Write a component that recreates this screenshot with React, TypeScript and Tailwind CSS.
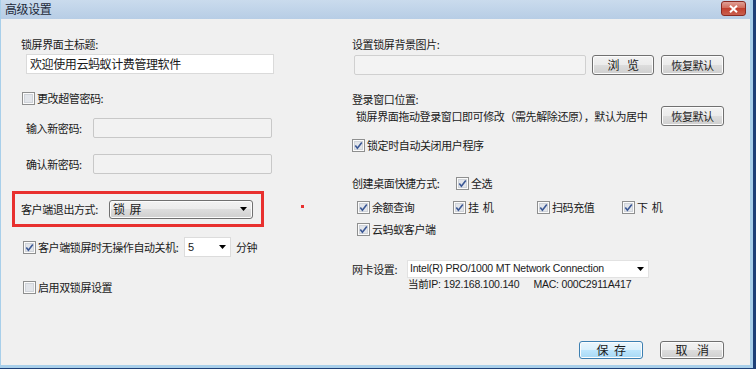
import type { ReactNode } from 'react';

function Check({ checked }: { checked?: boolean }) {
  return (
    <svg width="13" height="13" viewBox="0 0 13 13" className="shrink-0">
      <rect x="0.5" y="0.5" width="12" height="12" fill="#fbfbfb" stroke="#8e8f8f" />
      <rect x="2.5" y="2.5" width="8" height="8" fill="#e2e5ea" stroke="#cfd3d9" />
      {checked && (
        <path d="M3.3 6.4 L5.4 9.2 L9.8 3.4" fill="none" stroke="#3a5795" strokeWidth="1.6" />
      )}
    </svg>
  );
}

function CheckRow({ checked, label, className = '' }: { checked?: boolean; label: string; className?: string }) {
  return (
    <div className={`flex h-[14px] items-center gap-[2px] ${className}`}>
      <Check checked={checked} />
      <span className="leading-[14px]">{label}</span>
    </div>
  );
}

function Btn({ children, primary, className = '' }: { children: ReactNode; primary?: boolean; className?: string }) {
  const look = primary
    ? 'border-[#3c7fb1] bg-[linear-gradient(#eaf6fd,#d9f0fc_50%,#bee6fd_50%,#a7d9f5)]'
    : 'border-[#707070] bg-[linear-gradient(#f2f2f2,#ebebeb_50%,#dddddd_50%,#cfcfcf)]';
  return (
    <div
      className={`flex items-center justify-center rounded-[3px] border shadow-[inset_0_0_0_1px_#fcfcfc] leading-none ${look} ${className}`}
    >
      {children}
    </div>
  );
}

// two glyphs with a gap, as the old dialog pads its captions
function Spaced({ a, b, gap }: { a: string; b: string; gap: string }) {
  return (
    <span className={`flex ${gap}`}>
      <span>{a}</span>
      <span>{b}</span>
    </span>
  );
}

function Arrow() {
  return (
    <svg width="7" height="4" viewBox="0 0 7 4" className="shrink-0">
      <path d="M0 0 H7 L3.5 4 Z" fill="#000" />
    </svg>
  );
}

export default function App() {
  return (
    <div className="w-[756px] h-[369px] bg-[#1d3f77] pr-[3px] pb-[1px] font-['Noto_Sans_CJK_SC','Liberation_Sans',sans-serif] text-[11px] tracking-[-0.4px] text-[#1a1a1a] overflow-hidden">
      <div className="flex h-full flex-col bg-[#a8cfea] pr-[3px] pb-[3px] pl-[1px]">
        {/* title bar */}
        <div className="flex h-[19px] shrink-0 items-start justify-between bg-linear-to-b from-[#cadbed] to-[#b7cde5] pl-[4px] pr-[4px]">
          <span className="mt-[2px] text-[12px] leading-[14px] text-[#1e2a3a]">高级设置</span>
          <div className="mt-[1px] flex h-[15px] w-[25px] items-center justify-center rounded-[3px] border border-[#8a2a22] bg-[linear-gradient(#e0a096,#cf6656_50%,#c2402e_50%,#c9604f)]">
            <svg width="9" height="8" viewBox="0 0 9 8">
              <path d="M1 0.8 L8 7.2 M8 0.8 L1 7.2" stroke="#fff" strokeWidth="2" />
            </svg>
          </div>
        </div>

        {/* body */}
        <div className="flex flex-1 flex-col bg-[#f0f0f0] pb-[6px] pr-[26px]">
          <div className="flex pl-[11px]">
            {/* left column */}
            <div className="flex w-[340px] flex-col">
              <div className="ml-[9px] mt-[17px] h-[16px] leading-[16px]">锁屏界面主标题:</div>
              <div className="ml-[14px] mt-[2px] flex h-[20px] w-[248px] items-center border border-[#dadada] bg-white pl-[3px] text-[12px]">
                欢迎使用云蚂蚁计费管理软件
              </div>
              <CheckRow label="更改超管密码:" className="ml-[10px] mt-[17px]" />
              <div className="ml-[14px] mt-[13px] flex h-[20px] items-center">
                <span className="w-[67px]">输入新密码:</span>
                <div className="h-[20px] w-[179px] rounded-[2px] border border-[#c8c8c8] bg-[#f2f2f2]" />
              </div>
              <div className="ml-[14px] mt-[16px] flex h-[20px] items-center">
                <span className="w-[67px]">确认新密码:</span>
                <div className="h-[20px] w-[179px] rounded-[2px] border border-[#c8c8c8] bg-[#f2f2f2]" />
              </div>
              <div className="mt-[17px] flex items-center">
                <div className="flex h-[36px] w-[252px] items-center border-[3px] border-[#e8302e] pl-[6px]">
                  <span className="w-[88px]">客户端退出方式:</span>
                  <Btn className="h-[19px] w-[144px] !justify-between pl-[3px] pr-[5px] text-[12px]">
                    <Spaced a="锁" b="屏" gap="gap-[5px]" />
                    <Arrow />
                  </Btn>
                </div>
                <div className="ml-[37px] mb-[5px] h-[3px] w-[3px] bg-[#e8302e]" />
              </div>
              <div className="ml-[11px] mt-[10px] flex h-[20px] items-center">
                <CheckRow checked label="客户端锁屏时无操作自动关机:" className="w-[161px]" />
                <div className="flex h-[20px] w-[47px] items-center justify-between border border-[#dcdcdc] bg-white pl-[3px] pr-[4px] font-['Liberation_Sans',sans-serif] tracking-normal">
                  <span>5</span>
                  <Arrow />
                </div>
                <span className="ml-[5px]">分钟</span>
              </div>
              <CheckRow label="启用双锁屏设置" className="ml-[11px] mt-[23px]" />
            </div>

            {/* right column */}
            <div className="flex w-[372px] flex-col">
              <div className="mt-[17px] h-[16px] leading-[16px]">设置锁屏背景图片:</div>
              <div className="ml-[2px] mt-[3px] flex h-[20px] items-center">
                <div className="h-[20px] w-[232px] rounded-[2px] border border-[#d0d0d0] bg-[#f3f3f3]" />
                <Btn className="ml-[6px] h-[20px] w-[62px] text-[12px]">
                  <Spaced a="浏" b="览" gap="gap-[8px]" />
                </Btn>
                <Btn className="ml-[7px] h-[20px] w-[63px]">恢复默认</Btn>
              </div>
              <div className="mt-[17px] h-[14px] leading-[14px]">登录窗口位置:</div>
              <div className="flex h-[20px] items-center justify-between">
                <span className="ml-[4px]">锁屏界面拖动登录窗口即可修改（需先解除还原），默认为居中</span>
                <Btn className="h-[20px] w-[63px]">恢复默认</Btn>
              </div>
              <CheckRow checked label="锁定时自动关闭用户程序" className="mt-[12px]" />
              <div className="mt-[24px] flex h-[14px] items-center">
                <span className="w-[104px]">创建桌面快捷方式:</span>
                <CheckRow checked label="全选" />
              </div>
              <div className="ml-[5px] mt-[10px] flex">
                <CheckRow checked label="余额查询" className="w-[96px]" />
                <CheckRow checked label="挂  机" className="w-[84px] whitespace-pre" />
                <CheckRow checked label="扫码充值" className="w-[85px]" />
                <CheckRow checked label="下  机" className="whitespace-pre" />
              </div>
              <CheckRow checked label="云蚂蚁客户端" className="ml-[5px] mt-[8px]" />
              <div className="mt-[24px] flex h-[18px] items-center">
                <span className="w-[55px]">网卡设置:</span>
                <div className="flex h-[18px] w-[242px] items-center justify-between border border-[#e2e2e2] bg-white pl-[2px] pr-[4px] font-['Liberation_Sans',sans-serif] text-[10.5px] tracking-[-0.2px]">
                  <span>Intel(R) PRO/1000 MT Network Connection</span>
                  <Arrow />
                </div>
              </div>
              <div className="ml-[56px] flex h-[14px] items-center font-['Liberation_Sans','Noto_Sans_CJK_SC',sans-serif] text-[10.5px] tracking-[-0.2px]">
                <span>当前IP: 192.168.100.140</span>
                <span className="ml-[14px]">MAC: 000C2911A417</span>
              </div>
            </div>
          </div>

          {/* footer buttons */}
          <div className="mt-auto flex justify-end">
            <Btn primary className="h-[18px] w-[64px] text-[12px]">
              <Spaced a="保" b="存" gap="gap-[6px]" />
            </Btn>
            <Btn className="ml-[17px] h-[18px] w-[64px] text-[12px]">
              <Spaced a="取" b="消" gap="gap-[10px]" />
            </Btn>
          </div>
        </div>
      </div>
    </div>
  );
}
